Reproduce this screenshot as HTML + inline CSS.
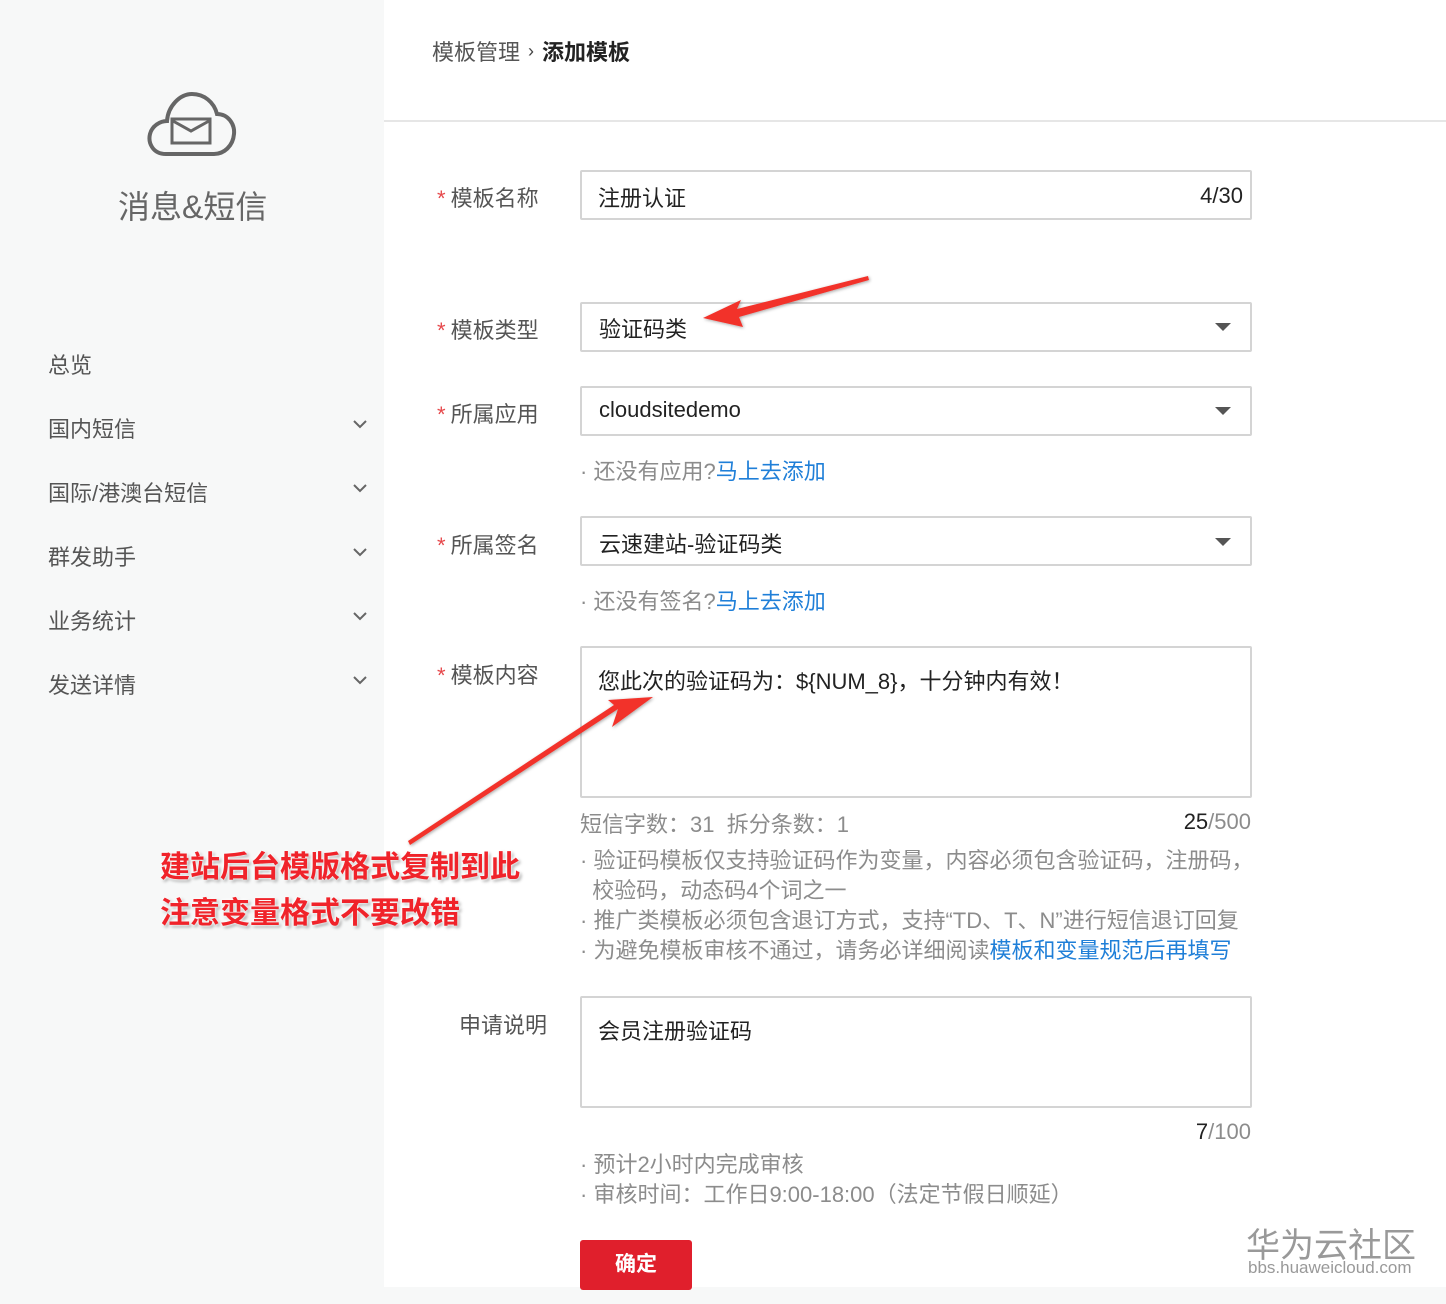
<!DOCTYPE html>
<html><head><meta charset="utf-8"><style>
*{margin:0;padding:0;box-sizing:border-box}
body{width:1446px;height:1304px;position:relative;overflow:hidden;background:#fff;font-family:"Liberation Sans","Noto Sans CJK SC",sans-serif;color:#333}
.a{position:absolute;white-space:nowrap}
.side{position:absolute;left:0;top:0;width:384px;height:1304px;background:#f7f8f8}
.nav{position:absolute;left:48px;font-size:22px;color:#555}
.chev{position:absolute;left:352px}
.lbl{position:absolute;font-size:22px;color:#555}
.lbl b{color:#e6484b;font-weight:normal;margin-right:5px}
.box{position:absolute;left:580px;width:672px;border:2px solid #d4d4d4;background:#fff;border-radius:2px}
.val{position:absolute;font-size:22px;color:#222}
.tri{position:absolute;left:1215px;width:0;height:0;border-left:8px solid transparent;border-right:8px solid transparent;border-top:8px solid #555}
.g{color:#8c8c8c;font-size:22px}
.r{position:absolute;right:195px;text-align:right}
.blue{color:#1f7fd8}
.note{position:absolute;font-size:30px;font-weight:bold;color:#f0232a;text-shadow:0 0 3px #fff,0 0 3px #fff,2px 2px 3px rgba(0,0,0,.4)}
</style></head><body>
<div class="side"></div>
<svg class="a" style="left:146px;top:90px" width="92" height="68" viewBox="0 0 92 68"><path d="M20 64 C6 64 2 52 4 44 C6 36 14 31 21 31 C22 16 34 4 46 4 C58 4 68 12 71 24 C82 24 89 34 88 44 C87 56 78 64 68 64 Z" fill="none" stroke="#666" stroke-width="4"/><rect x="26" y="29" width="38" height="24" fill="none" stroke="#666" stroke-width="3"/><path d="M27 31 L45 41 L63 31" fill="none" stroke="#666" stroke-width="3"/></svg>
<div class="a" style="left:118px;top:182px;font-size:32px;color:#666">消息&amp;短信</div>
<div class="nav" style="top:348px">总览</div>
<div class="nav" style="top:412px">国内短信</div>
<div class="nav" style="top:476px">国际/港澳台短信</div>
<div class="nav" style="top:540px">群发助手</div>
<div class="nav" style="top:604px">业务统计</div>
<div class="nav" style="top:668px">发送详情</div>
<svg class="chev" style="top:418px" width="16" height="12"><path d="M2 3 L8 9 L14 3" fill="none" stroke="#666" stroke-width="2"/></svg>
<svg class="chev" style="top:482px" width="16" height="12"><path d="M2 3 L8 9 L14 3" fill="none" stroke="#666" stroke-width="2"/></svg>
<svg class="chev" style="top:546px" width="16" height="12"><path d="M2 3 L8 9 L14 3" fill="none" stroke="#666" stroke-width="2"/></svg>
<svg class="chev" style="top:610px" width="16" height="12"><path d="M2 3 L8 9 L14 3" fill="none" stroke="#666" stroke-width="2"/></svg>
<svg class="chev" style="top:674px" width="16" height="12"><path d="M2 3 L8 9 L14 3" fill="none" stroke="#666" stroke-width="2"/></svg>

<div class="a" style="left:432px;top:35px;font-size:22px;color:#555">模板管理<span style="font-size:18px;margin:0 8px;position:relative;top:-3px;color:#444">›</span><b style="color:#222">添加模板</b></div>
<div class="a" style="left:384px;top:120px;width:1062px;height:2px;background:#e6e6e6"></div>

<div class="lbl" style="left:437px;top:181px"><b>*</b>模板名称</div>
<div class="box" style="top:170px;height:50px"></div>
<div class="val" style="left:598px;top:181px">注册认证</div>
<div class="val r" style="top:183px;right:203px">4/30</div>

<div class="lbl" style="left:437px;top:313px"><b>*</b>模板类型</div>
<div class="box" style="top:302px;height:50px"></div>
<div class="val" style="left:599px;top:312px">验证码类</div>
<div class="tri" style="top:323px"></div>

<div class="lbl" style="left:437px;top:397px"><b>*</b>所属应用</div>
<div class="box" style="top:386px;height:50px"></div>
<div class="val" style="left:599px;top:397px">cloudsitedemo</div>
<div class="tri" style="top:407px"></div>
<div class="a g" style="left:580px;top:454px">· 还没有应用?<span class="blue">马上去添加</span></div>

<div class="lbl" style="left:437px;top:528px"><b>*</b>所属签名</div>
<div class="box" style="top:516px;height:50px"></div>
<div class="val" style="left:599px;top:527px">云速建站-验证码类</div>
<div class="tri" style="top:538px"></div>
<div class="a g" style="left:580px;top:584px">· 还没有签名?<span class="blue">马上去添加</span></div>

<div class="lbl" style="left:437px;top:658px"><b>*</b>模板内容</div>
<div class="box" style="top:646px;height:152px"></div>
<div class="val" style="left:598px;top:664px">您此次的验证码为：${NUM_8}，十分钟内有效！</div>
<div class="a g" style="left:580px;top:807px">短信字数：31&nbsp; 拆分条数：1</div>
<div class="g r" style="top:809px"><span style="color:#222">25</span>/500</div>
<div class="a g" style="left:580px;top:846px;line-height:30px;white-space:normal;width:700px">· 验证码模板仅支持验证码作为变量，内容必须包含验证码，注册码，<br>&nbsp;&nbsp;校验码，动态码4个词之一<br>· 推广类模板必须包含退订方式，支持“TD、T、N”进行短信退订回复<br>· 为避免模板审核不通过，请务必详细阅读<span class="blue">模板和变量规范后再填写</span></div>

<div class="lbl" style="left:459px;top:1008px">申请说明</div>
<div class="box" style="top:996px;height:112px"></div>
<div class="val" style="left:598px;top:1014px">会员注册验证码</div>
<div class="g r" style="top:1119px"><span style="color:#222">7</span>/100</div>
<div class="a g" style="left:580px;top:1150px;line-height:30px">· 预计2小时内完成审核<br>· 审核时间：工作日9:00-18:00（法定节假日顺延）</div>
<div class="a" style="left:580px;top:1240px;width:112px;height:50px;background:#e01f2c;border-radius:3px;color:#fff;font-size:21px;font-weight:bold;text-align:center;line-height:50px">确定</div>
<div class="a" style="left:0;top:1287px;width:1446px;height:17px;background:#f7f8f8;z-index:-1"></div>

<div class="a" style="left:1246px;top:1218px;font-size:34px;color:#999;letter-spacing:0px">华为云社区</div>
<div class="a" style="left:1248px;top:1258px;font-size:17px;color:#999">bbs.huaweicloud.com</div>

<svg class="a" style="left:0;top:0" width="1446" height="1304">
<defs><filter id="s"><feDropShadow dx="1" dy="1" stdDeviation="1.5" flood-opacity=".35"/></filter></defs>
<polygon points="868,276 737,309 741,300 703,318 743,327 739,317 869,280" fill="#f2312a" filter="url(#s)"/>
<polygon points="410,845 618,709 612,727 653,697 608,700 614,705 408,841" fill="#f2312a" filter="url(#s)"/>
</svg>
<div class="note" style="left:160px;top:842px">建站后台模版格式复制到此</div>
<div class="note" style="left:160px;top:888px">注意变量格式不要改错</div>
</body></html>
